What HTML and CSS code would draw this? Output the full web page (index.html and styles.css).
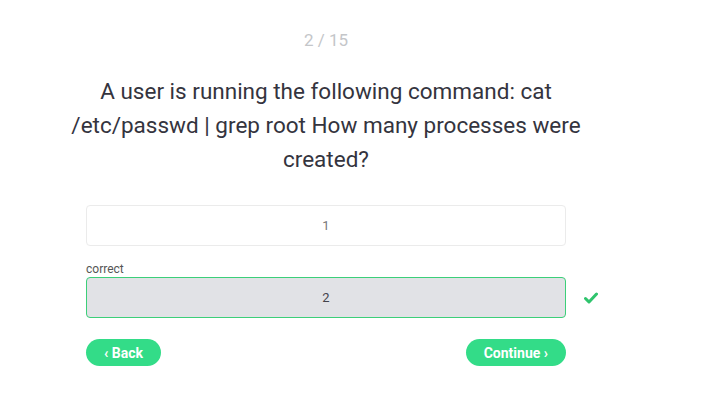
FILE: index.html
```html
<!DOCTYPE html>
<html>
<head>
<meta charset="utf-8">
<link rel="stylesheet" href="styles.css">
</head>
<body>
<div class="page">
  <div class="counter">2 / 15</div>
  <h1 class="question">A user is running the following command: cat /etc/passwd | grep root How many processes were created?</h1>
  <div class="answers">
    <div class="row">
      <div class="option">1</div>
      <div class="mark"></div>
    </div>
    <div class="label">correct</div>
    <div class="row">
      <div class="option selected">2</div>
      <div class="mark">
        <svg width="14" height="12" viewBox="0 0 14 12"><path d="M1.5 6.5 L5 10 L12.5 2" fill="none" stroke="#2fc46d" stroke-width="3" stroke-linecap="round" stroke-linejoin="round"/></svg>
      </div>
    </div>
    <div class="nav">
      <button class="btn">‹ Back</button>
      <button class="btn">Continue ›</button>
    </div>
  </div>
</div>
</body>
</html>
```
FILE: styles.css
```css
html, body { margin: 0; padding: 0; background: #fff; }
body { font-family: "Roboto", sans-serif; color: #33333d; }
.page { width: 652px; display: flex; flex-direction: column; align-items: center; padding-top: 28px; }
.counter { font-size: 17px; color: #c4c6c9; line-height: 24px; }
.question { width: 560px; margin: 22px 0 0; font-weight: 400; font-size: 22.5px; line-height: 34px; text-align: center; color: #34343e; }
.answers { width: 480px; padding: 0 60px; margin-top: 29px; }
.row { display: flex; align-items: center; }
.option { flex: 0 0 auto; width: 478px; height: 39px; border: 1px solid #ebebeb; border-radius: 4px; display: flex; align-items: center; justify-content: center; font-size: 13px; color: #777; }
.option.selected { background: #e1e2e6; border-color: #3ccf79; color: #44444c; }
.mark { flex: 0 0 50px; display: flex; justify-content: center; }
.label { font-size: 12px; color: #555; margin-top: 16px; margin-bottom: 0; line-height: 15px; }
.nav { display: flex; justify-content: space-between; margin-top: 21px; }
.btn { border: none; background: #33dc88; color: #fff; font-family: "Roboto", sans-serif; font-weight: 700; font-size: 14px; height: 27px; border-radius: 14px; padding: 0 18px; cursor: pointer; }
```
